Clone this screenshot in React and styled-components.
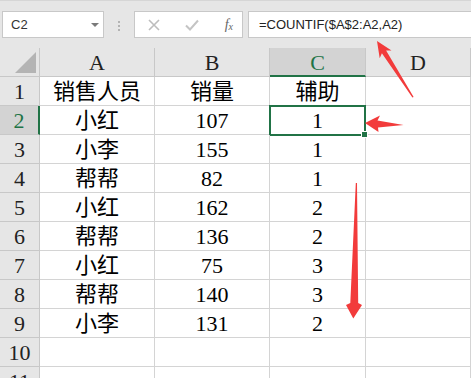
import React from "react";
import styled, { createGlobalStyle } from "styled-components";

const GREEN = "#217346";

const rows = [
  ["销售人员", "销量", "辅助"],
  ["小红", "107", "1"],
  ["小李", "155", "1"],
  ["帮帮", "82", "1"],
  ["小红", "162", "2"],
  ["帮帮", "136", "2"],
  ["小红", "75", "3"],
  ["帮帮", "140", "3"],
  ["小李", "131", "2"],
  ["", "", ""],
  ["", "", ""],
];

const Global = createGlobalStyle`
  body{
    margin: 0;
    background: #fff;
    font-family: "Liberation Sans", "Noto Sans CJK SC", sans-serif;
  }
`;

export default function App() {
  return (
    <Page>
      <Global />
      <Bar>
        <NameBox>
          C2
          <Caret />
        </NameBox>
        <Splitter>
          <i />
          <i />
          <i />
        </Splitter>
        <IconBox>
          <svg width="12" height="12" viewBox="0 0 12 12">
            <path d="M1 1 L11 11 M11 1 L1 11" stroke="#bdbdbd" strokeWidth="1.6" fill="none" />
          </svg>
          <svg width="14" height="12" viewBox="0 0 14 12">
            <path d="M1 6.5 L5 10.5 L13 1.5" stroke="#c4c4c4" strokeWidth="2" fill="none" />
          </svg>
          <Fx>
            f<sub>x</sub>
          </Fx>
        </IconBox>
        <Formula>=COUNTIF($A$2:A2,A2)</Formula>
      </Bar>

      <Sheet>
        <Corner>
          <span />
        </Corner>
        {["A", "B", "C", "D"].map((c) => (
          <ColHead key={c} $on={c === "C"}>
            {c}
          </ColHead>
        ))}
        {rows.map((r, i) => (
          <React.Fragment key={i}>
            <RowHead $on={i === 1}>{i + 1}</RowHead>
            <Cell>{r[0]}</Cell>
            <Cell>{r[1]}</Cell>
            <Cell $active={i === 1}>{r[2]}</Cell>
            <Cell />
          </React.Fragment>
        ))}
      </Sheet>

      <Arrows viewBox="0 0 471 378" width="471" height="378">
        <polygon
          points="377,41 391.5,50.6 386.1,50.6 413.6,97 412.4,97.4 381.9,53.3 379.7,58.2"
          fill="#f23b3b"
        />
        <polygon points="365,123 380,115.5 377.5,120.5 403.5,125 378,127.5 378.5,132" fill="#f23b3b" />
        <polygon
          points="357,183 358.2,303 362,305 353.3,318.5 346,305 350.3,303 355.8,183"
          fill="#f23b3b"
        />
      </Arrows>
    </Page>
  );
}

const Page = styled.div`
  position: relative;
  width: 471px;
  height: 378px;
  overflow: hidden;
  background: #e6e6e6;
`;

const Bar = styled.div`
  height: 48px;
  box-sizing: border-box;
  padding: 11px 0 0 2px;
  display: flex;
  align-items: flex-start;
  border-top: 1px solid #d6d6d6;
`;

const Box = styled.div`
  height: 27px;
  box-sizing: border-box;
  background: #fff;
  border: 1px solid #c8c8c8;
  display: flex;
  align-items: center;
  margin-top: -1px;
`;

const NameBox = styled(Box)`
  width: 102px;
  padding-left: 8px;
  font-size: 13px;
  color: #333;
  position: relative;
`;

const Caret = styled.span`
  position: absolute;
  left: 88px;
  top: 11px;
  border-left: 4px solid transparent;
  border-right: 4px solid transparent;
  border-top: 4px solid #7a7a7a;
`;

const Splitter = styled.div`
  width: 30px;
  height: 27px;
  display: flex;
  flex-direction: column;
  align-items: center;
  justify-content: center;
  gap: 2px;
  i{
    width: 2px;
    height: 2px;
    background: #b3b3b3;
  }
`;

const IconBox = styled(Box)`
  width: 109px;
  padding: 0 9px 0 13px;
  justify-content: space-between;
`;

const Fx = styled.span`
  font-family: "Liberation Serif", serif;
  font-style: italic;
  font-size: 14px;
  color: #666;
  sub{
    font-size: 10px;
    vertical-align: -1px;
  }
`;

const Formula = styled(Box)`
  flex: 1;
  margin-left: 5px;
  margin-right: -2px;
  padding-left: 10px;
  font-size: 13px;
  color: #222;
`;

const Sheet = styled.div`
  display: grid;
  grid-template-columns: 40px 115px 115px 96px 1fr;
  grid-auto-rows: 29px;
  background: #fff;
  font-family: "Liberation Serif", "Noto Sans CJK SC", serif;
  font-size: 22px;
  color: #000;
`;

const HeadBase = styled.div`
  box-sizing: border-box;
  background: #e6e6e6;
  border-right: 1px solid #c8c8c8;
  border-bottom: 1px solid #c8c8c8;
  display: flex;
  align-items: center;
  justify-content: center;
  color: #222;
  line-height: 1;
`;

const Corner = styled(HeadBase)`
  position: relative;
  span{
    position: absolute;
    right: 3px;
    bottom: 3px;
    width: 0;
    height: 0;
    border-left: 21px solid transparent;
    border-bottom: 21px solid #b4b4b4;
  }
`;

const ColHead = styled(HeadBase)`
  padding-top: 2px;
  background: ${(p) => (p.$on ? "#d3d3d3" : "#e6e6e6")};
  color: ${(p) => (p.$on ? GREEN : "#222")};
  border-bottom: ${(p) => (p.$on ? `2px solid ${GREEN}` : "1px solid #c8c8c8")};
`;

const RowHead = styled(HeadBase)`
  padding-top: 2px;
  background: ${(p) => (p.$on ? "#d3d3d3" : "#e6e6e6")};
  color: ${(p) => (p.$on ? GREEN : "#222")};
  border-right: ${(p) => (p.$on ? `2px solid ${GREEN}` : "1px solid #c8c8c8")};
`;

const Cell = styled.div`
  position: relative;
  box-sizing: border-box;
  border-right: 1px solid #d4d4d4;
  border-bottom: 1px solid #d4d4d4;
  display: flex;
  align-items: center;
  justify-content: center;
  padding-top: 2px;
  line-height: 1;
  white-space: nowrap;
  ${(p) =>
    p.$active &&
    `
    &::after{
      content: "";
      position: absolute;
      top: -1px;
      left: -1px;
      right: -1px;
      bottom: -2px;
      border: 2px solid ${GREEN};
    }
    &::before{
      content: "";
      position: absolute;
      right: -3px;
      bottom: -4px;
      width: 5px;
      height: 5px;
      background: ${GREEN};
      border: 1px solid #fff;
      z-index: 1;
    }
  `}
`;

const Arrows = styled.svg`
  position: absolute;
  left: 0;
  top: 0;
  pointer-events: none;
`;
